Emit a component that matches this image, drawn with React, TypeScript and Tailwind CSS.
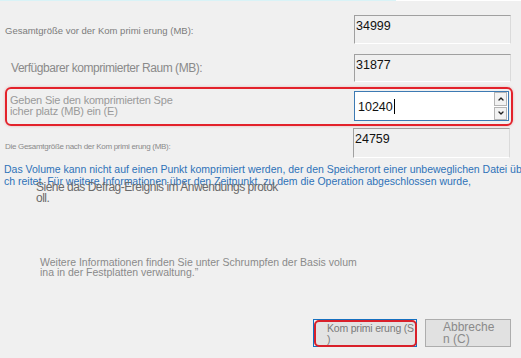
import { ChevronUp, ChevronDown } from 'lucide-react';

// Shrink-volume dialog body — a stack of label/value rows, the warning text
// and the two buttons at the bottom right.

const ReadOnlyBox = ({ value, className = '' }: { value: string; className?: string }) => (
  <div
    className={`w-[157px] shrink-0 border-t border-l border-t-[#a0a0a0] border-l-[#a0a0a0] border-r border-r-[#dadada] border-b border-b-white pl-[1px] pt-[3px] text-[12.5px] leading-[14px] text-[#111] ${className}`}
  >
    {value}
  </div>
);

export default function App() {
  return (
    <div className="relative h-[358px] w-[521px] overflow-hidden bg-[#f0f0f0] font-['Liberation_Sans',Arial,sans-serif]">
      <div className="flex h-px">
        <div className="w-[396px] bg-[#d9f3f7]" />
        <div className="flex-1 bg-white" />
      </div>

      {/* row 1 */}
      <div className="mt-[14px] flex h-[29px] items-center pr-[10px]">
        <span className="ml-[5px] flex-1 pt-[3px] text-[9.5px] text-[#7c7c7c]">
          Gesamtgröße vor der Kom primi erung (MB):
        </span>
        <ReadOnlyBox value="34999" className="h-[29px]" />
      </div>

      {/* row 2 */}
      <div className="mt-[10px] flex h-[28px] items-center pr-[10px]">
        <span className="ml-[11px] flex-1 text-[12px] tracking-[-0.45px] text-[#8a8a8a]">
          Verfügbarer komprimierter Raum (MB):
        </span>
        <ReadOnlyBox value="31877" className="h-[28px]" />
      </div>

      {/* highlighted input row */}
      <div className="mx-[8px] ml-[5px] mt-[5px] flex h-[39px] items-start rounded-[6px] border-2 border-[#e3222b] pr-[2px] pt-[2px] shadow-[0_0_3px_rgba(200,0,0,0.25)]">
        <div className="flex-1 pl-[3px] pt-[4px] text-[11px] leading-[11px] tracking-[-0.2px] text-[#9a9a9a]">
          Geben Sie den komprimierten Spe
          <br />
          icher platz (MB) ein (E)
        </div>
        <div className="flex h-[30px] w-[155px] shrink-0 items-center border border-[#3d7ab3] bg-white">
          <span className="ml-[3px] flex-1 text-[12.5px] text-[#111]">
            10240<span className="ml-px inline-block h-[15px] w-px translate-y-[3px] bg-black" />
          </span>
          <div className="mr-px flex h-[28px] w-[13px] flex-col gap-px">
            <div className="flex flex-1 items-center justify-center border border-[#b5b5b5] bg-[#f2f2f2]">
              <ChevronUp size={8} strokeWidth={4} color="#222" />
            </div>
            <div className="flex flex-1 items-center justify-center border border-[#b5b5b5] bg-[#f2f2f2]">
              <ChevronDown size={8} strokeWidth={4} color="#222" />
            </div>
          </div>
        </div>
      </div>

      {/* row 4 */}
      <div className="mt-[2px] flex h-[30px] items-center pr-[11px]">
        <span className="ml-[5px] flex-1 pt-[7px] text-[8px] tracking-[-0.3px] text-[#8a8a8a]">
          Die Gesamtgröße nach der Kom primi erung (MB):
        </span>
        <ReadOnlyBox value="24759" className="h-[30px]" />
      </div>

      {/* warning */}
      <div className="ml-[4px] mt-[5px] whitespace-nowrap text-[10.5px] leading-[12px] text-[#2e72b8]">
        Das Volume kann nicht auf einen Punkt komprimiert werden, der den Speicherort einer unbeweglichen Datei übe
        <br />
        ch reitet. Für weitere Informationen über den Zeitpunkt, zu dem die Operation abgeschlossen wurde,
      </div>
      <div className="ml-[36px] -mt-[5px] text-[12px] leading-[11px] tracking-[-0.5px] text-[#6a6a6a]">
        Siehe das Defrag-Ereignis im Anwendungs protok
        <br />
        oll.
      </div>

      <div className="ml-[40px] mt-[53px] text-[10.5px] leading-[10px] text-[#8a8a8a]">
        Weitere Informationen finden Sie unter Schrumpfen der Basis volum
        <br />
        ina in der Festplatten verwaltung.”
      </div>

      {/* buttons */}
      <div className="mt-[42px] flex justify-end gap-[8px] pr-[10px]">
        <div className="h-[28px] w-[104px] border border-[#1570c0]">
          <div className="-mr-px h-[27px] overflow-hidden whitespace-nowrap rounded-[5px] border-2 border-[#d9202a] bg-[#e3e3e3] pl-[11px] pt-[1px] text-[10.5px] leading-[11px] tracking-[-0.2px] text-[#7a7a7a]">
            Kom primi erung (S
            <br />)
          </div>
        </div>
        <div className="h-[28px] w-[86px] border border-[#adadad] bg-[#e1e1e1] pl-[17px] pt-[1px] text-[12px] leading-[12px] text-[#8a8a8a]">
          Abbreche
          <br />n (C)
        </div>
      </div>
    </div>
  );
}
